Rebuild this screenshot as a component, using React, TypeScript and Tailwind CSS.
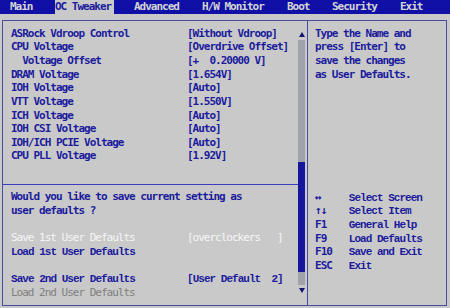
const settings: [string, string][] = [
  ['ASRock Vdroop Control', '[Without Vdroop]'],
  ['CPU Voltage', '[Overdrive Offset]'],
  ['  Voltage Offset', '[+  0.20000 V]'],
  ['DRAM Voltage', '[1.654V]'],
  ['IOH Voltage', '[Auto]'],
  ['VTT Voltage', '[1.550V]'],
  ['ICH Voltage', '[Auto]'],
  ['IOH CSI Voltage', '[Auto]'],
  ['IOH/ICH PCIE Voltage', '[Auto]'],
  ['CPU PLL Voltage', '[1.92V]'],
]

const keys: [string, string][] = [
  ['↔', 'Select Screen'],
  ['↑↓', 'Select Item'],
  ['F1', 'General Help'],
  ['F9', 'Load Defaults'],
  ['F10', 'Save and Exit'],
  ['ESC', 'Exit'],
]

function Row({ label, value, className }: { label: string; value?: string; className: string }) {
  return (
    <div className={`flex h-[13.67px] items-center whitespace-pre pl-[8px] ${className}`}>
      <span className="w-[176px] shrink-0">{label}</span>
      {value && <span>{value}</span>}
    </div>
  )
}

export default function App() {
  return (
    <div className="h-[308px] w-[450px] overflow-hidden bg-[#c9c9c9] font-['DejaVu_Sans_Mono',monospace] text-[11px] tracking-[-1px] text-[#1c1c9c]">
      {/* menu bar */}
      <div className="flex h-[14px] items-center whitespace-pre bg-[#1010a6] pl-[10px] font-bold text-[#d4d4d4]">
        <div className="w-[45px]">Main</div>
        <div className="w-[79px]">
          <span className="flex h-[14px] w-[59px] items-center overflow-hidden bg-[#c9c9c9] text-[#1c1c9c]">OC Tweaker</span>
        </div>
        <div className="w-[68px]">Advanced</div>
        <div className="w-[85px]">H/W Monitor</div>
        <div className="w-[45px]">Boot</div>
        <div className="w-[68px]">Security</div>
        <div>Exit</div>
      </div>

      <div className="pl-[2px] pt-[6px]">
        <div className="flex h-[286px] w-[445px] border border-[#4a4a9e]">
          {/* left panel */}
          <div className="flex w-[304px] shrink-0">
            <div className="flex-1 pt-[6px]">
              {settings.map(([l, v]) => (
                <Row key={l} label={l} value={v} className="font-bold" />
              ))}
              <div className="h-[13.67px]" />
              <div className="flex h-[13.67px] items-center">
                <div className="h-px w-full bg-[#3c3cc4]" />
              </div>
              <Row label="Would you like to save current setting as" className="font-bold" />
              <Row label="user defaults ?" className="font-bold" />
              <div className="h-[13.67px]" />
              <Row label="Save 1st User Defaults" value="[overclockers   ]" className="text-[#f6f6f6]" />
              <Row label="Load 1st User Defaults" className="font-['Liberation_Mono',monospace] font-bold tracking-[-0.975px]" />
              <div className="h-[13.67px]" />
              <Row
                label="Save 2nd User Defaults"
                value="[User Default  2]"
                className="font-['Liberation_Mono',monospace] font-bold tracking-[-0.975px]"
              />
              <Row label="Load 2nd User Defaults" className="text-[#808080]" />
            </div>

            {/* scrollbar */}
            <div className="mr-[2px] flex w-[7px] flex-col">
              <div className="flex h-[19px] items-end justify-center pb-[3px]">
                <svg width="6" height="5" viewBox="0 0 6 5">
                  <path d="M3 0L6 5H0z" fill="#14146e" />
                </svg>
              </div>
              <div className="h-[122px] bg-[#a1a1aa]" />
              <div className="h-[110px] bg-[#16169c]" />
              <div className="h-[13px] bg-[#a1a1aa]" />
              <div className="flex h-[10px] items-center justify-center">
                <svg width="6" height="5" viewBox="0 0 6 5">
                  <path d="M0 0H6L3 5z" fill="#14146e" />
                </svg>
              </div>
            </div>
          </div>

          {/* right panel */}
          <div className="flex-1 border-l border-[#4a4a9e] pl-[7px] pt-[6px] font-bold">
            {['Type the Name and', 'press [Enter] to', 'save the changes', 'as User Defaults.'].map((t) => (
              <div key={t} className="flex h-[13.67px] items-center whitespace-pre">
                {t}
              </div>
            ))}
            <div className="mt-[109.36px] font-['Liberation_Mono',monospace] tracking-[-0.975px]">
              {keys.map(([k, d]) => (
                <div key={k} className="flex h-[13.67px] items-center whitespace-pre">
                  <span className="w-[33.75px] shrink-0 font-['DejaVu_Sans_Mono',monospace]">{k}</span>
                  <span>{d}</span>
                </div>
              ))}
            </div>
          </div>
        </div>
      </div>
    </div>
  )
}
